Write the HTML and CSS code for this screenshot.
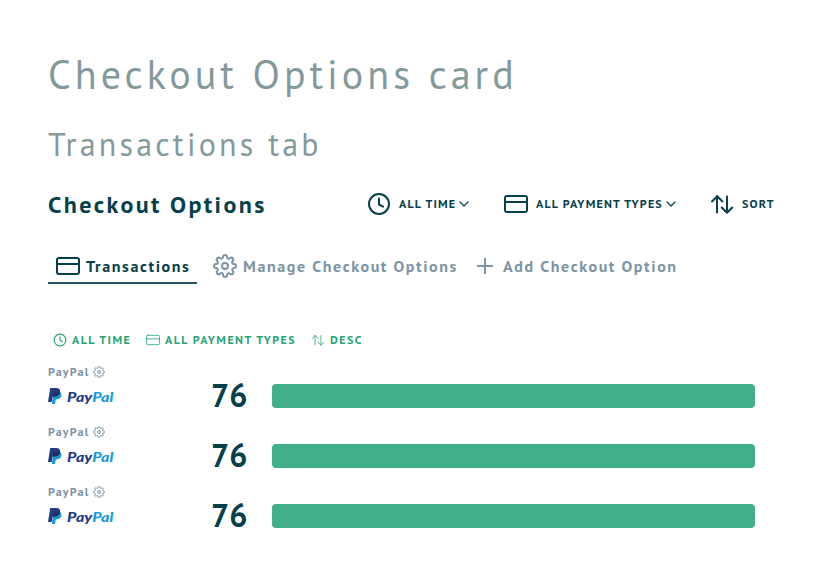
FILE: index.html
```html
<!DOCTYPE html>
<html lang="en">
<head>
<meta charset="utf-8">
<title>Checkout Options</title>
<link rel="stylesheet" href="styles.css">
</head>
<body>
<svg class="defs" aria-hidden="true">
  <symbol id="clock" viewBox="0 0 24 24"><circle cx="12" cy="12" r="10"/><path d="M12 6.5V12.5L16 14.7"/></symbol>
  <symbol id="card" viewBox="0 0 24 24"><rect x="1" y="4" width="22" height="16" rx="2"/><path d="M1 10H23"/></symbol>
  <symbol id="sort" viewBox="0 0 24 24"><path d="M7 20.5V4M2 9.5L7.2 4.2L12.5 9.5M17 4.5V20.5M11.7 15.5L17 20.7L22.3 15.5"/></symbol>
  <symbol id="gear" viewBox="0 0 24 24"><circle cx="12" cy="12" r="3"/><path d="M19.4 15a1.65 1.65 0 0 0 .33 1.82l.06.06a2 2 0 1 1-2.83 2.83l-.06-.06a1.65 1.65 0 0 0-2.8 1.17V21a2 2 0 0 1-4 0v-.09a1.65 1.65 0 0 0-2.9-1.26l-.06.06a2 2 0 1 1-2.83-2.83l.06-.06A1.65 1.65 0 0 0 3.1 14H3a2 2 0 0 1 0-4h.09a1.65 1.65 0 0 0 1.26-2.9l-.06-.06a2 2 0 1 1 2.83-2.83l.06.06A1.65 1.65 0 0 0 10 3.1V3a2 2 0 0 1 4 0v.09a1.65 1.65 0 0 0 2.82 1.18l.06-.06a2 2 0 1 1 2.83 2.83l-.06.06A1.65 1.65 0 0 0 20.9 10H21a2 2 0 0 1 0 4h-.09a1.65 1.65 0 0 0-1.51 1z"/></symbol>
  <symbol id="chevron" viewBox="0 0 10 10"><path d="M1 3L5 7L9 3"/></symbol>
  <symbol id="paypal" viewBox="0 0 14 16"><path fill="#179bd7" d="M11.9 4.1c1.3.7 1.9 1.8 1.5 3.5-.5 2.6-2.2 3.8-4.8 3.8H7.8L7 16H3.8L5.5 5z"/><path fill="#253b80" d="M2.2 0h5.9c2.7 0 4.4 1.3 4 4.1-.5 3-2.4 4.4-5.3 4.4H4.7L3.7 14H0z"/><path fill="#222d65" d="M5.5 3.7h5.2c.5 0 1 .1 1.4.4-.5 3-2.4 4.4-5.3 4.4H4.7z"/></symbol>
</svg>
<main class="page">
  <h1 class="title">Checkout Options card</h1>
  <h2 class="subtitle">Transactions tab</h2>
  <header class="header">
    <h3 class="heading">Checkout Options</h3>
    <button class="filter filter-time"><svg class="icon"><use href="#clock"/></svg><span>ALL TIME</span><svg class="chevron"><use href="#chevron"/></svg></button>
    <button class="filter filter-type"><svg class="icon"><use href="#card"/></svg><span>ALL PAYMENT TYPES</span><svg class="chevron"><use href="#chevron"/></svg></button>
    <button class="filter"><svg class="icon"><use href="#sort"/></svg><span>SORT</span></button>
  </header>
  <nav class="tabs">
    <a class="tab tab-active"><svg class="icon"><use href="#card"/></svg><span>Transactions</span></a>
    <a class="tab tab-manage"><svg class="icon"><use href="#gear"/></svg><span>Manage Checkout Options</span></a>
    <a class="tab tab-add"><svg class="icon-plus" viewBox="0 0 16 16"><path d="M8 0V16M0 8H16"/></svg><span>Add Checkout Option</span></a>
  </nav>
  <div class="applied">
    <span class="chip chip-time"><svg class="icon-small"><use href="#clock"/></svg>ALL TIME</span>
    <span class="chip chip-type"><svg class="icon-small thin"><use href="#card"/></svg>ALL PAYMENT TYPES</span>
    <span class="chip"><svg class="icon-small thin"><use href="#sort"/></svg>DESC</span>
  </div>
  <section class="rows">
    <div class="row">
      <div class="provider"><div class="name"><span>PayPal</span><svg class="icon-gear"><use href="#gear"/></svg></div><div class="brand"><svg class="mark"><use href="#paypal"/></svg><span class="wordmark">Pay<b>Pal</b></span></div></div>
      <strong class="count">76</strong><div class="bar"></div>
    </div>
    <div class="row">
      <div class="provider"><div class="name"><span>PayPal</span><svg class="icon-gear"><use href="#gear"/></svg></div><div class="brand"><svg class="mark"><use href="#paypal"/></svg><span class="wordmark">Pay<b>Pal</b></span></div></div>
      <strong class="count">76</strong><div class="bar"></div>
    </div>
    <div class="row">
      <div class="provider"><div class="name"><span>PayPal</span><svg class="icon-gear"><use href="#gear"/></svg></div><div class="brand"><svg class="mark"><use href="#paypal"/></svg><span class="wordmark">Pay<b>Pal</b></span></div></div>
      <strong class="count">76</strong><div class="bar"></div>
    </div>
  </section>
</main>
</body>
</html>
```
FILE: styles.css
```css
* { box-sizing: border-box; }
body { margin: 0; background: #fff; color: #07404b; font-family: "PT Sans", "Noto Sans", sans-serif; }
h1, h2, h3 { margin: 0; }
svg { flex: none; fill: none; stroke: currentColor; stroke-width: 2; stroke-linecap: round; stroke-linejoin: round; }
.defs { display: none; }
.page { height: 584px; padding: 46px 48px 0; white-space: nowrap; overflow: hidden; }
.title { height: 56px; font-size: 40px; font-weight: 400; line-height: 56px; letter-spacing: 4px; color: #839a9d; }
.subtitle { height: 40px; margin-top: 22px; font-size: 32px; font-weight: 400; line-height: 40px; letter-spacing: 3.2px; color: #839a9d; }
.header { display: flex; align-items: center; height: 40px; margin-top: 20px; }
.heading { flex: none; width: 319px; padding-top: 2px; font-size: 24px; font-weight: 700; line-height: 38px; letter-spacing: 2.4px; }
.filter { display: flex; flex: none; align-items: center; padding: 0; border: 0; background: none; color: inherit; font: 700 12px/24px "PT Sans", "Noto Sans", sans-serif; letter-spacing: 1.2px; }
.filter-time { width: 137px; }
.filter-type { width: 206px; }
.icon { width: 24px; height: 24px; }
.filter .icon { margin-right: 8px; }
.chevron { width: 10px; height: 10px; margin-left: 3px; stroke-width: 1.2; }
.tabs { display: flex; height: 36px; margin-top: 24px; color: #7d94a4; font-size: 16px; font-weight: 700; line-height: 24px; letter-spacing: 1.6px; }
.tab { display: flex; align-items: center; }
.tab .icon { margin-right: 6px; }
.tab-active { width: 149px; padding: 2px 0 0 8px; border-bottom: 2px solid #275660; color: #07404b; }
.tab-manage { width: 264px; padding-left: 16px; }
.tab-add { padding-left: 16px; }
.icon-plus { width: 16px; height: 16px; margin-right: 10px; stroke-linecap: butt; }
.applied { display: flex; height: 20px; margin-top: 46px; padding-left: 5px; color: #28a477; font-size: 12px; font-weight: 700; line-height: 20px; letter-spacing: 1.44px; }
.chip { display: flex; align-items: center; }
.chip-time { width: 93px; }
.chip-type { width: 165px; }
.icon-small { width: 14px; height: 14px; margin-right: 5px; }
.thin { stroke-width: 1.4; }
.rows { display: grid; grid-auto-rows: 60px; margin-top: 15px; }
.row { display: grid; grid-template-columns: 163px 61px 483px; }
.name { display: flex; align-items: center; height: 14px; color: #7d94a4; font-size: 12px; font-weight: 700; line-height: 14px; letter-spacing: 1.2px; }
.icon-gear { width: 12px; height: 12px; margin-left: 4px; }
.brand { display: flex; align-items: center; height: 17px; margin-top: 8px; }
.mark { width: 14px; height: 16px; margin-right: 5px; stroke: none; }
.wordmark { padding-top: 2px; color: #253b80; font: italic 900 13px/16px Lato, sans-serif; letter-spacing: 0; transform: scaleX(1.23); transform-origin: left; }
.wordmark b { color: #179bd7; font-weight: inherit; }
.count { height: 40px; margin-top: 10px; font-size: 32px; line-height: 40px; }
.bar { height: 24px; margin-top: 19px; border-radius: 4px; background: #41b089; }
```
